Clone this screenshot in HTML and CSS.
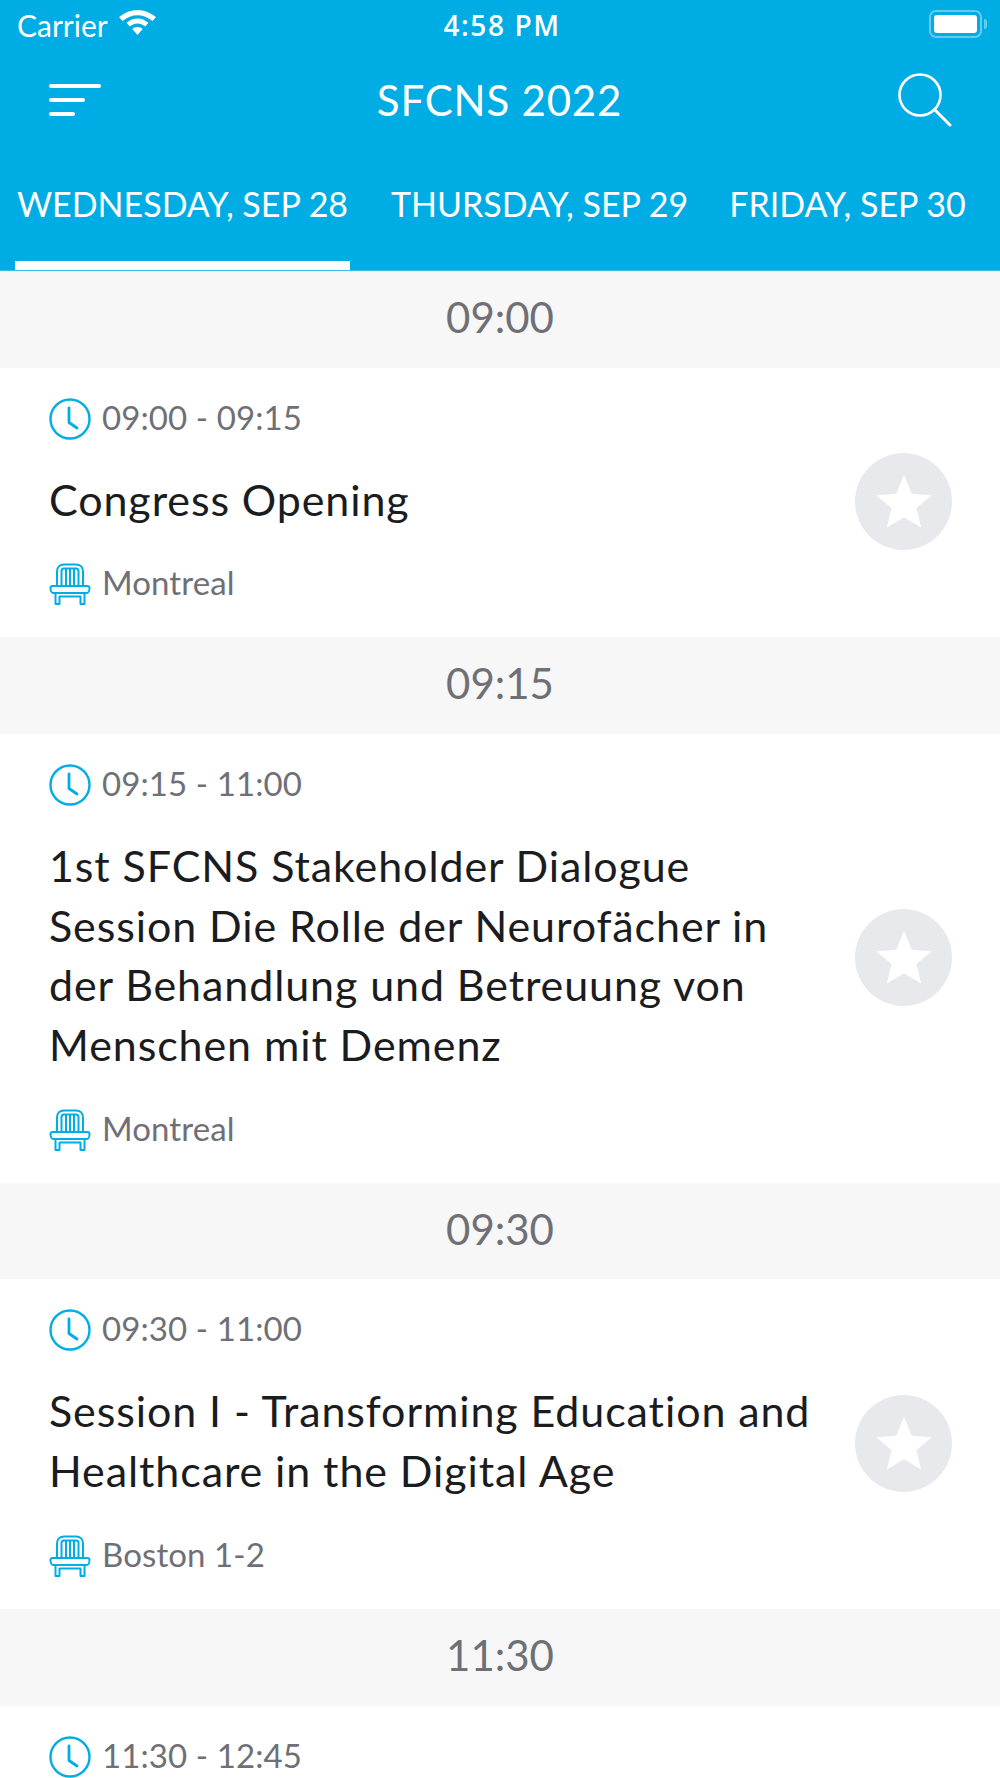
FILE: index.html
```html
<!DOCTYPE html>
<html lang="en">
<head>
<meta charset="utf-8">
<title>SFCNS 2022</title>
<link rel="stylesheet" href="styles.css">
</head>
<body>
<svg class="defs" width="0" height="0" aria-hidden="true">
  <symbol id="clock" viewBox="0 0 42 42">
    <circle cx="21" cy="21" r="19.500" fill="none" stroke="#00ade6" stroke-width="2.400"/>
    <path d="M20 10v14.500l8 5.500" fill="none" stroke="#00ade6" stroke-width="2.800" stroke-linecap="round" stroke-linejoin="round"/>
  </symbol>
  <symbol id="chair" viewBox="0 0 42 42">
    <g fill="none" stroke="#00ade6" stroke-width="2" stroke-linejoin="round" stroke-linecap="round">
      <path d="M8 23V8.500C8 4 11 1.500 15 1.500h12c4 0 7 2.500 7 7V23"/>
      <path d="M12.500 23V8c0-1.500 1-2.500 2.500-2.500h12c1.500 0 2.500 1 2.500 2.500v15"/>
      <path d="M17 6v17M21 6v17M25 6v17"/>
      <path d="M3.500 23h35c1.500 0 2 1 2 2s-.5 5-2.500 5H4c-2 0-2.500-4-2.500-5s.5-2 2-2z"/>
      <path d="M6.500 30v11h4V33.500h21V41h4V30"/>
    </g>
  </symbol>
  <symbol id="star" viewBox="0 0 56 56">
    <path d="M28 1.500l7.700 19.300 20 1.500-15.400 12.900 4.900 19.300L28 44.300 10.800 54.500l4.900-19.300L.3 22.300l20-1.500z" fill="#fff"/>
  </symbol>
</svg>

<header class="top">
  <div class="status">
    <div class="status-left">
      <span>Carrier</span>
      <svg class="wifi" viewBox="0 0 37 27" aria-hidden="true">
        <path d="M18.500 1C12 1 6 3.500 0 8l3.500 4C8.500 8 13 6.200 18.500 6.200S28.500 8 33.500 12L37 8C31 3.500 25 1 18.500 1z" fill="#fff"/>
        <path d="M18.500 9.500c-4 0-7.500 1.500-11 4.200l3.300 3.700c2.500-2 5-3 7.700-3s5.200 1 7.700 3l3.300-3.700c-3.500-2.700-7-4.200-11-4.200z" fill="#fff"/>
        <path d="M18.500 18c-2 0-3.700.7-5.200 1.900l5.200 6.100 5.200-6.100C22.200 18.700 20.500 18 18.500 18z" fill="#fff"/>
      </svg>
    </div>
    <div class="status-time">4:58 PM</div>
    <div class="status-right">
      <span class="battery"><span class="battery-fill"></span></span>
      <span class="battery-tip"></span>
    </div>
  </div>
  <div class="nav">
    <div class="menu" aria-label="Menu">
      <span class="menu-line l1"></span>
      <span class="menu-line l2"></span>
      <span class="menu-line l3"></span>
    </div>
    <h1 class="nav-title">SFCNS 2022</h1>
    <svg class="search" viewBox="0 0 54 54" aria-label="Search">
      <circle cx="22" cy="22" r="20.500" fill="none" stroke="#fff" stroke-width="2.600"/>
      <path d="M36.500 36.500L52 52" fill="none" stroke="#fff" stroke-width="3" stroke-linecap="round"/>
    </svg>
  </div>
  <div class="tabs">
    <div class="tab tab-active">WEDNESDAY, SEP 28</div>
    <div class="tab tab-2">THURSDAY, SEP 29</div>
    <div class="tab tab-3">FRIDAY, SEP 30</div>
  </div>
</header>

<main>
  <div class="slot">09:00</div>
  <article class="item">
    <div class="item-body">
      <div class="meta"><svg class="ico"><use href="#clock"/></svg><span class="meta-text">09:00 - 09:15</span></div>
      <h2 class="item-title">Congress Opening</h2>
      <div class="meta"><svg class="ico"><use href="#chair"/></svg><span class="meta-text">Montreal</span></div>
    </div>
    <div class="fav"><svg class="fav-star"><use href="#star"/></svg></div>
  </article>

  <div class="slot">09:15</div>
  <article class="item">
    <div class="item-body">
      <div class="meta"><svg class="ico"><use href="#clock"/></svg><span class="meta-text">09:15 - 11:00</span></div>
      <h2 class="item-title">1st SFCNS Stakeholder Dialogue<br>Session Die Rolle der Neurofächer in<br>der Behandlung und Betreuung von<br>Menschen mit Demenz</h2>
      <div class="meta"><svg class="ico"><use href="#chair"/></svg><span class="meta-text">Montreal</span></div>
    </div>
    <div class="fav"><svg class="fav-star"><use href="#star"/></svg></div>
  </article>

  <div class="slot">09:30</div>
  <article class="item">
    <div class="item-body">
      <div class="meta"><svg class="ico"><use href="#clock"/></svg><span class="meta-text">09:30 - 11:00</span></div>
      <h2 class="item-title">Session I - Transforming Education and<br>Healthcare in the Digital Age</h2>
      <div class="meta"><svg class="ico"><use href="#chair"/></svg><span class="meta-text">Boston 1-2</span></div>
    </div>
    <div class="fav"><svg class="fav-star"><use href="#star"/></svg></div>
  </article>

  <div class="slot">11:30</div>
  <article class="item">
    <div class="item-body">
      <div class="meta"><svg class="ico"><use href="#clock"/></svg><span class="meta-text">11:30 - 12:45</span></div>
    </div>
  </article>
</main>
</body>
</html>
```

FILE: styles.css
```css
* { box-sizing: border-box; }
html, body { margin: 0; padding: 0; }
body {
  width: 1000px;
  height: 1778px;
  overflow: hidden;
  background: #fff;
  font-family: Lato, "Open Sans", sans-serif;
  color: #1b1c20;
}
.defs { position: absolute; }

.top {
  height: 271px;
  background: #00ace4;
  border-bottom: 1px solid #3bbdea;
  color: #fff;
}
.status {
  height: 50px;
  padding: 0 13px 0 17px;
  display: flex;
  align-items: center;
  font-size: 30px;
}
.status-left { flex: 1; display: flex; align-items: center; gap: 11px; }
.wifi { width: 37px; height: 27px; margin-top: -5px; }
.status-time { font-family: "Open Sans", sans-serif; font-weight: 600; font-size: 28px; letter-spacing: 1.600px; }
.status-right { flex: 1; display: flex; align-items: center; justify-content: flex-end; gap: 2px; margin-top: -2px; }
.battery {
  width: 53px;
  height: 28px;
  border: 2px solid #66caef;
  border-radius: 7px;
  padding: 3px;
  display: flex;
}
.battery-fill { flex: 1; background: #fff; border-radius: 3px; }
.battery-tip { width: 3px; height: 10px; background: #66caef; border-radius: 0 3px 3px 0; }

.nav {
  height: 100px;
  padding: 0 49px;
  display: flex;
  align-items: center;
  justify-content: space-between;
}
.menu { width: 52px; display: flex; flex-direction: column; gap: 10px; }
.menu-line { height: 4px; background: #fff; border-radius: 2px; display: block; }
.l1 { width: 52px; }
.l2 { width: 36px; }
.l3 { width: 26px; }
.nav-title { margin: 0; font-size: 42px; font-weight: 400; letter-spacing: .8px; }
.search { width: 54px; height: 54px; margin-right: -1px; }

.tabs {
  height: 120px;
  padding-left: 15px;
  display: flex;
  align-items: flex-start;
}
.tab {
  font-size: 34px;
  line-height: 40px;
  height: 120px;
  padding-top: 34px;
  white-space: nowrap;
}
.tab-active {
  width: 335px;
  text-align: center;
  border-bottom: 9px solid #fff;
}
.tab-2 { margin-left: 41px; }
.tab-3 { margin-left: 41px; }

.slot {
  height: 96.500px;
  padding-bottom: 5px;
  background: #f7f7f7;
  color: #6f7075;
  font-size: 42px;
  display: flex;
  align-items: center;
  justify-content: center;
}
.item {
  padding: 30px 49px 32px;
  display: flex;
  align-items: center;
  justify-content: space-between;
  background: #fff;
}
.meta {
  display: flex;
  align-items: center;
  gap: 11px;
  height: 42px;
  color: #6f7075;
  font-size: 33px;
  letter-spacing: .1px;
}
.meta-text { padding-bottom: 4px; }
.ico { width: 42px; height: 42px; flex: none; }
.item-title {
  margin: 30px 0 34px;
  font-size: 43px;
  line-height: 59.800px;
  font-weight: 400;
  letter-spacing: .9px;
  color: #1b1c20;
  white-space: nowrap;
}
.fav {
  width: 97px;
  height: 97px;
  margin-right: -1px;
  border-radius: 50%;
  background: #e8e9ed;
  display: flex;
  align-items: center;
  justify-content: center;
  flex: none;
}
.fav-star { width: 56px; height: 56px; }
```
